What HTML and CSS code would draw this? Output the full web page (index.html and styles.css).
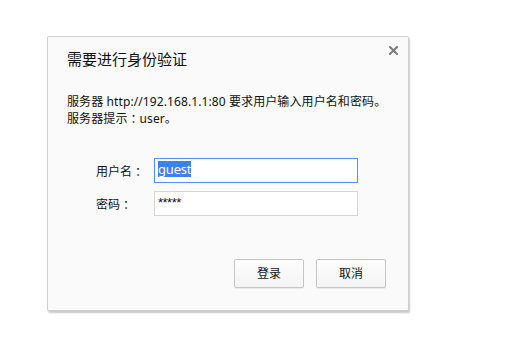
FILE: index.html
```html
<!DOCTYPE html>
<html lang="zh-CN">
<head>
<meta charset="utf-8">
<title>需要进行身份验证</title>
<link rel="stylesheet" href="styles.css">
</head>
<body>
<div class="dialog">
  <div class="close" aria-label="关闭">
    <svg width="9" height="9" viewBox="0 0 9 9"><path d="M1 1 L8 8 M8 1 L1 8" stroke="#7a7a7a" stroke-width="2" stroke-linecap="square" fill="none"/></svg>
  </div>
  <div class="title">需要进行身份验证</div>
  <div class="message">
    <div>服务器 http://192.168.1.1:80 要求用户输入用户名和密码。</div>
    <div>服务器提示<span class="colon">：</span>user。</div>
  </div>
  <div class="form">
    <div class="row">
      <div class="label">用户名<span class="colon">：</span></div>
      <div class="field focused"><span class="sel">guest</span></div>
    </div>
    <div class="row">
      <div class="label">密码<span class="colon">：</span></div>
      <div class="field"><span class="pw">*****</span></div>
    </div>
  </div>
  <div class="buttons">
    <div class="btn">登录</div>
    <div class="btn">取消</div>
  </div>
</div>
</body>
</html>
```
FILE: styles.css
```css
html, body {
  margin: 0;
  padding: 0;
  background: #ffffff;
}
body {
  font-family: "Noto Sans", "Noto Sans CJK SC", sans-serif;
  color: #111111;
  width: 513px;
  height: 361px;
  overflow: hidden;
}
.dialog {
  position: relative;
  box-sizing: border-box;
  margin: 36px 0 0 47px;
  width: 362px;
  height: 275px;
  background: #fafafa;
  border: 1px solid #cfcfcf;
  border-radius: 2px;
  box-shadow: 1px 2px 2px rgba(0, 0, 0, 0.22);
  padding: 12px 0 0 19px;
}
.close {
  position: absolute;
  top: 9px;
  right: 10px;
  width: 9px;
  height: 9px;
  line-height: 0;
}
.title {
  font-size: 15px;
  line-height: 20px;
}
.message {
  margin-top: 25px;
  font-size: 12px;
  line-height: 16px;
  letter-spacing: 0.1px;
}
.colon {
  padding-left: 3px;
  letter-spacing: -3px;
  font-family: "Noto Sans CJK SC", sans-serif;
}
.form {
  margin-top: 31px;
  padding-left: 29px;
  display: flex;
  flex-direction: column;
  gap: 8px;
}
.row {
  display: flex;
  align-items: center;
}
.label {
  width: 58px;
  font-size: 12px;
}
.field {
  box-sizing: border-box;
  width: 204px;
  height: 25px;
  background: #ffffff;
  border: 1px solid #d6d6d6;
  padding: 2px 0 0 3px;
  font-size: 13px;
  line-height: 16px;
}
.field.focused {
  border-color: #4d90fe;
}
.sel {
  display: inline-block;
  background: #3b82f0;
  color: #ffffff;
  height: 16px;
  line-height: 16px;
  letter-spacing: -0.2px;
}
.pw {
  display: inline-block;
  font-family: "Liberation Sans", sans-serif;
  font-size: 13px;
  line-height: 12px;
  letter-spacing: -0.5px;
}
.buttons {
  margin-top: 43px;
  padding-right: 22px;
  display: flex;
  justify-content: flex-end;
  gap: 12px;
}
.btn {
  box-sizing: border-box;
  width: 70px;
  height: 29px;
  border: 1px solid #c6c6c6;
  border-radius: 2px;
  background: linear-gradient(#fdfdfd, #f4f4f4);
  box-shadow: 0 1px 0 rgba(0, 0, 0, 0.06);
  font-size: 12px;
  line-height: 27px;
  text-align: center;
}
```
